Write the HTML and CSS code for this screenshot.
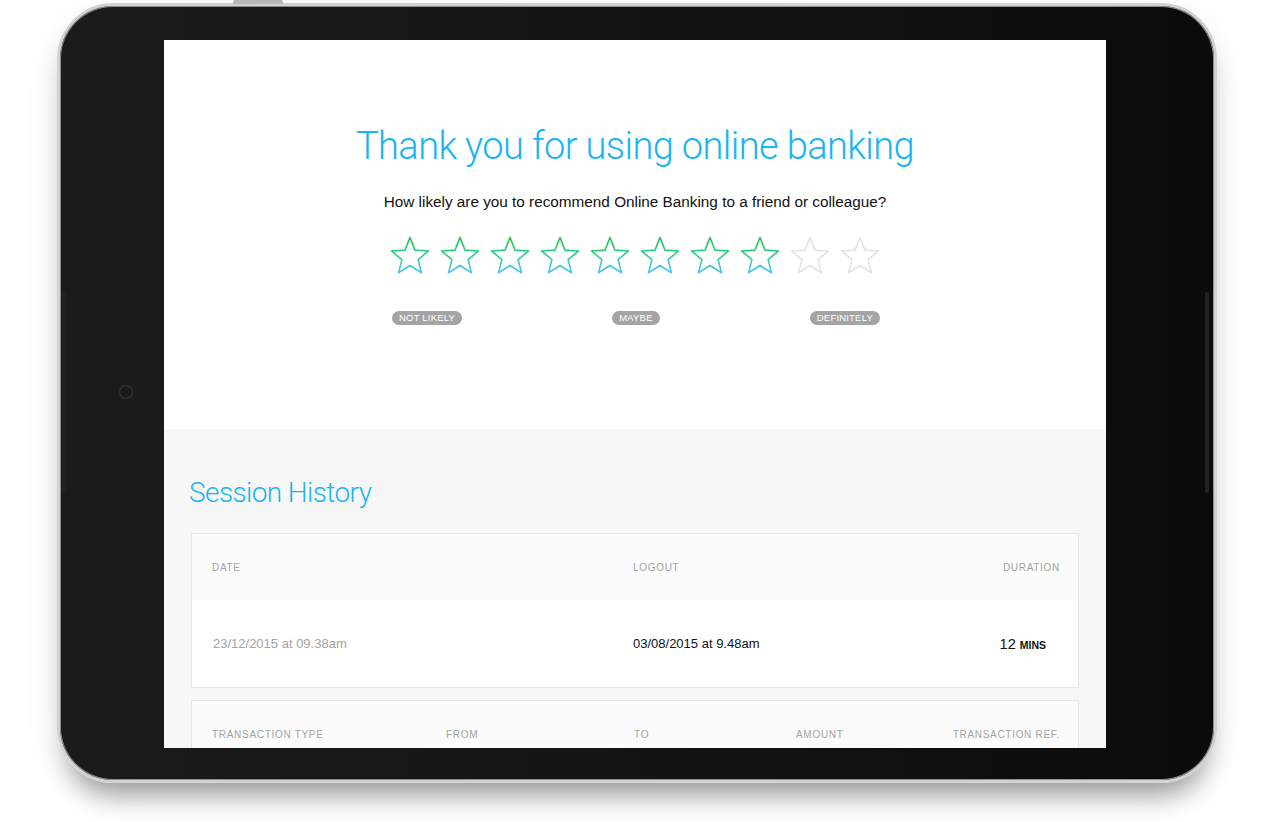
FILE: index.html
```html
<!DOCTYPE html>
<html lang="en">
<head>
<meta charset="utf-8">
<title>Thank you for using online banking</title>
<link rel="stylesheet" href="styles.css">
</head>
<body>
<svg class="defs" width="0" height="0" aria-hidden="true">
  <defs>
    <linearGradient id="starGrad" x1="0" y1="2" x2="0" y2="37" gradientUnits="userSpaceOnUse">
      <stop offset="0" stop-color="#1fc247"/>
      <stop offset="0.45" stop-color="#2ccf8a"/>
      <stop offset="1" stop-color="#4fc4f4"/>
    </linearGradient>
  </defs>
</svg>
<div class="stage">
  <div class="tablet">
    <span class="top-button"></span>
    <span class="side-button side-left"></span>
    <span class="side-button side-right"></span>
    <span class="camera"></span>
    <div class="screen">
      <section class="survey">
        <h1 class="survey-title">Thank you for using online banking</h1>
        <p class="survey-question">How likely are you to recommend Online Banking to a friend or colleague?</p>
        <div class="stars">
          <svg class="star on" viewBox="0 0 40 40"><polygon points="20,1.5 25,14.12 38.55,14.97 28.08,23.63 31.46,36.78 20,29.5 8.54,36.78 11.92,23.63 1.45,14.97 15,14.12"/></svg>
          <svg class="star on" viewBox="0 0 40 40"><polygon points="20,1.5 25,14.12 38.55,14.97 28.08,23.63 31.46,36.78 20,29.5 8.54,36.78 11.92,23.63 1.45,14.97 15,14.12"/></svg>
          <svg class="star on" viewBox="0 0 40 40"><polygon points="20,1.5 25,14.12 38.55,14.97 28.08,23.63 31.46,36.78 20,29.5 8.54,36.78 11.92,23.63 1.45,14.97 15,14.12"/></svg>
          <svg class="star on" viewBox="0 0 40 40"><polygon points="20,1.5 25,14.12 38.55,14.97 28.08,23.63 31.46,36.78 20,29.5 8.54,36.78 11.92,23.63 1.45,14.97 15,14.12"/></svg>
          <svg class="star on" viewBox="0 0 40 40"><polygon points="20,1.5 25,14.12 38.55,14.97 28.08,23.63 31.46,36.78 20,29.5 8.54,36.78 11.92,23.63 1.45,14.97 15,14.12"/></svg>
          <svg class="star on" viewBox="0 0 40 40"><polygon points="20,1.5 25,14.12 38.55,14.97 28.08,23.63 31.46,36.78 20,29.5 8.54,36.78 11.92,23.63 1.45,14.97 15,14.12"/></svg>
          <svg class="star on" viewBox="0 0 40 40"><polygon points="20,1.5 25,14.12 38.55,14.97 28.08,23.63 31.46,36.78 20,29.5 8.54,36.78 11.92,23.63 1.45,14.97 15,14.12"/></svg>
          <svg class="star on" viewBox="0 0 40 40"><polygon points="20,1.5 25,14.12 38.55,14.97 28.08,23.63 31.46,36.78 20,29.5 8.54,36.78 11.92,23.63 1.45,14.97 15,14.12"/></svg>
          <svg class="star off" viewBox="0 0 40 40"><polygon points="20,1.5 25,14.12 38.55,14.97 28.08,23.63 31.46,36.78 20,29.5 8.54,36.78 11.92,23.63 1.45,14.97 15,14.12"/></svg>
          <svg class="star off" viewBox="0 0 40 40"><polygon points="20,1.5 25,14.12 38.55,14.97 28.08,23.63 31.46,36.78 20,29.5 8.54,36.78 11.92,23.63 1.45,14.97 15,14.12"/></svg>
        </div>
        <div class="scale">
          <span class="pill">Not likely</span>
          <span class="pill">Maybe</span>
          <span class="pill">Definitely</span>
        </div>
      </section>
      <section class="history">
        <h2 class="history-title">Session History</h2>
        <div class="card">
          <div class="row head session-cols">
            <span>Date</span>
            <span>Logout</span>
            <span class="right">Duration</span>
          </div>
          <div class="row body body-cols">
            <span class="muted">23/12/2015 at 09.38am</span>
            <span>03/08/2015 at 9.48am</span>
            <span class="right duration">12 <span class="unit">mins</span></span>
          </div>
        </div>
        <div class="card card-second">
          <div class="row head tx-cols">
            <span>Transaction type</span>
            <span>From</span>
            <span>To</span>
            <span>Amount</span>
            <span class="right">Transaction ref.</span>
          </div>
        </div>
      </section>
    </div>
  </div>
</div>
</body>
</html>
```

FILE: styles.css
```css
html, body {
  margin: 0;
  padding: 0;
}
body {
  width: 1274px;
  height: 822px;
  overflow: hidden;
  background: #ffffff;
  font-family: "Liberation Sans", Arial, sans-serif;
}
.defs {
  display: block;
  width: 0;
  height: 0;
  overflow: hidden;
}
.stage {
  padding: 3px 0 0 57px;
}
.tablet {
  position: relative;
  box-sizing: border-box;
  width: 1160px;
  height: 780px;
  border: 3px solid #d2d2d2;
  border-radius: 56px;
  padding: 34px 108px 32px 104px;
  background: linear-gradient(90deg, #1b1b1b 0%, #141414 50%, #0b0b0b 100%);
  box-shadow: inset 0 0 0 1px #8d8d8d, 0 24px 26px -12px rgba(0, 0, 0, 0.33), 0 12px 40px -8px rgba(0, 0, 0, 0.14);
}
.top-button {
  position: absolute;
  top: -6px;
  left: 173px;
  width: 50px;
  height: 4px;
  border-radius: 2px 2px 0 0;
  background: #b8b8b8;
}
.side-button {
  position: absolute;
  top: 286px;
  width: 4px;
  height: 201px;
  border-radius: 2px;
  background: #232323;
}
.side-left {
  left: 2px;
  background: #212121;
}
.side-right {
  left: 1145px;
}
.camera {
  position: absolute;
  left: 60px;
  top: 380px;
  width: 12px;
  height: 12px;
  border-radius: 50%;
  background: #181818;
  box-shadow: 0 0 0 1.5px #2c2c2c, inset 0 0 2px #333;
}
.screen {
  width: 942px;
  height: 708px;
  overflow: hidden;
  background: #f7f7f7;
}
.survey {
  box-sizing: border-box;
  height: 389px;
  padding-top: 83px;
  background: #ffffff;
  text-align: center;
}
.survey-title {
  margin: 0;
  font-family: Roboto, "Liberation Sans", sans-serif;
  font-weight: 300;
  font-size: 38px;
  line-height: 46px;
  letter-spacing: -0.6px;
  color: #1ab4f2;
}
.survey-question {
  margin: 23px 0 0;
  font-size: 15.3px;
  line-height: 20px;
  color: #111111;
}
.stars {
  display: flex;
  justify-content: center;
  gap: 10px;
  margin-top: 24px;
}
.star {
  display: block;
  width: 40px;
  height: 40px;
}
.star polygon {
  fill: none;
  stroke-width: 1.6;
  stroke-linejoin: round;
}
.star.on polygon {
  stroke: url(#starGrad);
}
.star.off polygon {
  stroke: #e3e3e3;
}
.scale {
  display: flex;
  justify-content: space-between;
  box-sizing: border-box;
  width: 490px;
  margin: 35px auto 0;
  padding-left: 2px;
}
.pill {
  display: block;
  height: 14px;
  padding: 0 7px;
  border-radius: 7px;
  background: #a4a4a4;
  color: #ffffff;
  font-size: 9.5px;
  font-weight: 400;
  line-height: 14px;
  text-transform: uppercase;
  letter-spacing: 0.2px;
}
.history {
  padding: 47px 27px 0;
}
.history-title {
  margin: 0 0 23px -2px;
  font-family: Roboto, "Liberation Sans", sans-serif;
  font-weight: 300;
  font-size: 28px;
  line-height: 34px;
  letter-spacing: -0.6px;
  color: #1ab4f2;
}
.card {
  border: 1px solid #e6e6e6;
  background: #ffffff;
}
.card-second {
  margin-top: 12px;
}
.row {
  display: grid;
  align-items: center;
  padding: 0 18px 0 20px;
}
.head {
  height: 66px;
  background: #fbfbfb;
  font-size: 10px;
  letter-spacing: 0.7px;
  text-transform: uppercase;
  color: #a3a3a3;
}
.body {
  height: 87px;
  font-size: 13px;
  color: #111111;
}
.session-cols {
  grid-template-columns: 421px 1fr auto;
}
.body-cols {
  grid-template-columns: 421px 1fr auto;
  padding-right: 32px;
}
.tx-cols {
  grid-template-columns: 234px 188px 162px 1fr auto;
}
.right {
  text-align: right;
}
.muted {
  color: #a3a3a3;
  padding-left: 1px;
}
.duration {
  font-size: 14.5px;
}
.unit {
  font-size: 10.5px;
  font-weight: 700;
  text-transform: uppercase;
}
```
